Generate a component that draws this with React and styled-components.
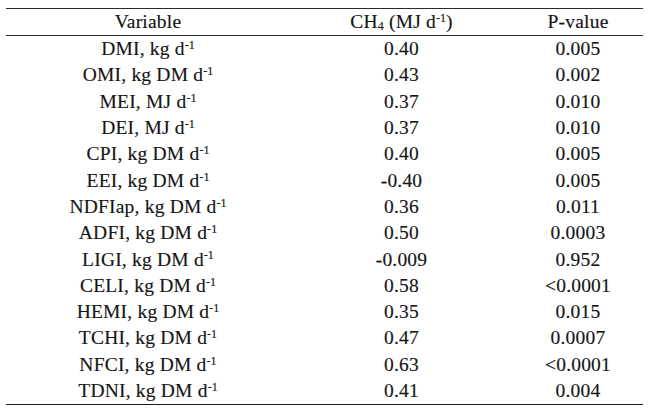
import React from "react";
import styled, { createGlobalStyle } from "styled-components";

const GlobalStyle = createGlobalStyle`
  html, body {
    margin: 0;
    padding: 0;
    background: #ffffff;
  }
  body {
    font-family: "Liberation Serif", "Times New Roman", serif;
    color: #151515;
  }
`;

const rows = [
  ["DMI, kg d", "0.40", "0.005"],
  ["OMI, kg DM d", "0.43", "0.002"],
  ["MEI, MJ d", "0.37", "0.010"],
  ["DEI, MJ d", "0.37", "0.010"],
  ["CPI, kg DM d", "0.40", "0.005"],
  ["EEI, kg DM d", "-0.40", "0.005"],
  ["NDFIap, kg DM d", "0.36", "0.011"],
  ["ADFI, kg DM d", "0.50", "0.0003"],
  ["LIGI, kg DM d", "-0.009", "0.952"],
  ["CELI, kg DM d", "0.58", "<0.0001"],
  ["HEMI, kg DM d", "0.35", "0.015"],
  ["TCHI, kg DM d", "0.47", "0.0007"],
  ["NFCI, kg DM d", "0.63", "<0.0001"],
  ["TDNI, kg DM d", "0.41", "0.004"],
];

const Page = styled.div`
  width: 650px;
  height: 410px;
  padding: 8px 7px 0 6px;
  box-sizing: border-box;
`;

const Table = styled.table`
  width: 637px;
  border-collapse: collapse;
  font-size: 19.5px;
  letter-spacing: 0.2px;
  -webkit-text-stroke: 0.15px #151515;
  border-top: 1.5px solid #2a2a2a;
  border-bottom: 1.5px solid #1a1a1a;
`;

const HeadCell = styled.th`
  font-weight: normal;
  height: 26px;
  padding: 0;
  text-align: center;
  border-bottom: 1.5px solid #2a2a2a;
  width: ${(p) => p.$w}px;
`;

const Cell = styled.td`
  height: 26.3px;
  padding: 0;
  text-align: center;
`;

const Sup = styled.sup`
  font-size: 0.62em;
  letter-spacing: 0;
  vertical-align: 0;
  position: relative;
  top: -0.5em;
`;

const Sub = styled.sub`
  font-size: 0.62em;
  vertical-align: 0;
  position: relative;
  top: 0.15em;
`;

export default function App() {
  return (
    <Page>
      <GlobalStyle />
      <Table>
        <thead>
          <tr>
            <HeadCell $w={284}>Variable</HeadCell>
            <HeadCell $w={223}>
              CH<Sub>4</Sub> (MJ d<Sup>-1</Sup>)
            </HeadCell>
            <HeadCell $w={130}>P-value</HeadCell>
          </tr>
        </thead>
        <tbody>
          {rows.map(([name, ch4, p]) => (
            <tr key={name}>
              <Cell>
                {name}
                <Sup>-1</Sup>
              </Cell>
              <Cell>{ch4}</Cell>
              <Cell>{p}</Cell>
            </tr>
          ))}
        </tbody>
      </Table>
    </Page>
  );
}
